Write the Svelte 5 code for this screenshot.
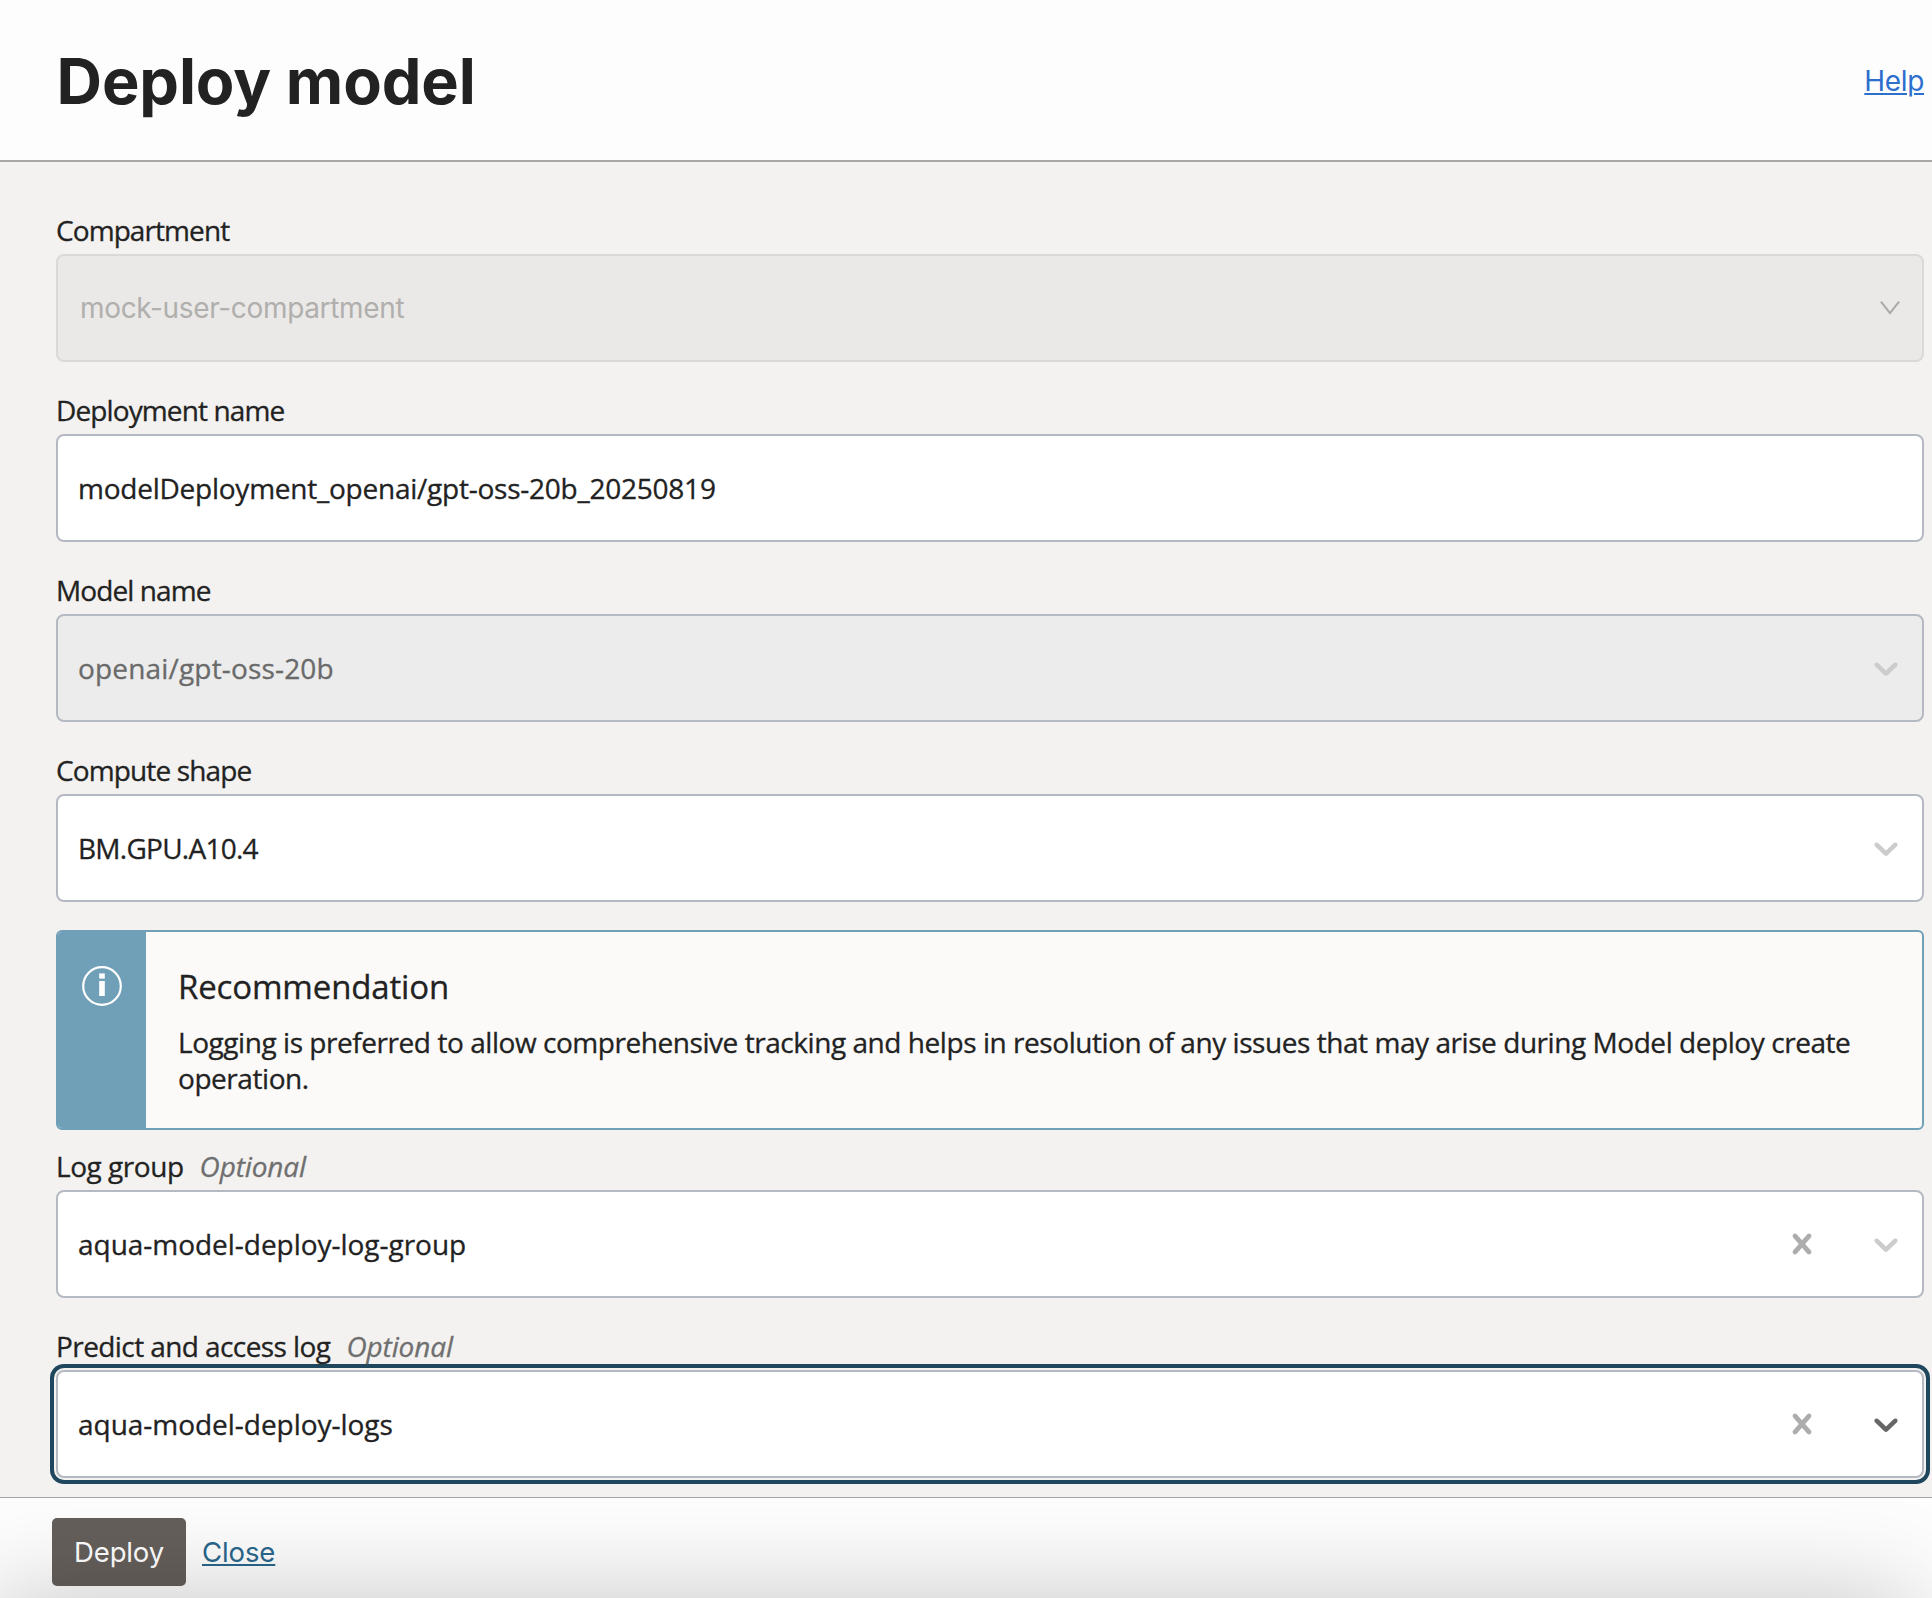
<script>
  const fields = [
    { id: 'compartment', label: 'Compartment', value: 'mock-user-compartment', kind: 'muted', thin: true },
    { id: 'deployment', label: 'Deployment name', value: 'modelDeployment_openai/gpt-oss-20b_20250819', kind: 'input' },
    { id: 'model', label: 'Model name', value: 'openai/gpt-oss-20b', kind: 'disabled', chevron: true },
    { id: 'shape', label: 'Compute shape', value: 'BM.GPU.A10.4', kind: 'select', chevron: true }
  ];
  const logFields = [
    { id: 'loggroup', label: 'Log group', optional: true, value: 'aqua-model-deploy-log-group', kind: 'select', clear: true, chevron: true },
    { id: 'predict', label: 'Predict and access log', optional: true, value: 'aqua-model-deploy-logs', kind: 'focused', clear: true, chevron: true }
  ];
</script>

{#snippet formField(f)}
  <div class="field {f.id}">
    <div class="label"><span class="name">{f.label}</span>{#if f.optional}<em>Optional</em>{/if}</div>
    <div class="control {f.kind}">
      <span class="value">{f.value}</span>
      {#if f.clear}
        <svg class="clear" viewBox="0 0 20 20"><path d="M14.348 14.849c-0.469 0.469-1.229 0.469-1.697 0l-2.651-3.030-2.651 3.029c-0.469 0.469-1.229 0.469-1.697 0-0.469-0.469-0.469-1.229 0-1.697l2.758-3.15-2.759-3.152c-0.469-0.469-0.469-1.228 0-1.697s1.228-0.469 1.697 0l2.652 3.031 2.651-3.031c0.469-0.469 1.228-0.469 1.697 0s0.469 1.229 0 1.697l-2.758 3.152 2.758 3.15c0.469 0.469 0.469 1.229 0 1.698z" /></svg>
      {/if}
      {#if f.chevron}
        <svg class="chevron" viewBox="0 0 20 20"><path d="M4.516 7.548c0.436-0.446 1.043-0.481 1.576 0l3.908 3.747 3.908-3.747c0.533-0.481 1.141-0.446 1.574 0 0.436 0.445 0.408 1.197 0 1.615-0.406 0.418-4.695 4.502-4.695 4.502-0.217 0.223-0.502 0.335-0.787 0.335s-0.57-0.112-0.789-0.335c0 0-4.287-4.084-4.695-4.502s-0.436-1.17 0-1.615z" /></svg>
      {/if}
      {#if f.thin}
        <svg class="thin" viewBox="0 0 20 14"><path d="M0.9 0.6 10 12.2 19.1 0.6" /></svg>
      {/if}
    </div>
  </div>
{/snippet}

<div class="page">
  <header>
    <h1>Deploy model</h1>
    <a class="help" href="#help">Help</a>
  </header>

  <main>
    {#each fields as f}{@render formField(f)}{/each}

    <section class="alert">
      <div class="strip">
        <svg viewBox="0 0 40 40">
          <circle cx="20" cy="20" r="18.8" />
          <rect x="17.2" y="7.4" width="5.6" height="5.2" />
          <rect x="17.2" y="15" width="5.6" height="15" />
        </svg>
      </div>
      <div class="message">
        <h2>Recommendation</h2>
        <p>Logging is preferred to allow comprehensive tracking and helps in resolution of any issues that may arise during Model deploy create operation.</p>
      </div>
    </section>

    {#each logFields as f}{@render formField(f)}{/each}
  </main>

  <footer>
    <button>Deploy</button>
    <a class="close" href="#close">Close</a>
  </footer>
</div>

<style>
  :global(body) { margin: 0; }
  .page {
    box-sizing: border-box;
    display: flex;
    flex-direction: column;
    height: 1598px;
    overflow: hidden;
    background: #f3f2f0;
    color: #222;
    font: 28px 'Open Sans', 'Noto Sans', sans-serif;
  }
  header {
    box-sizing: border-box;
    height: 162px;
    padding: 2px 8px 0 56.5px;
    display: flex;
    align-items: center;
    justify-content: space-between;
    background: #fdfdfd;
    border-bottom: 2px solid #a8a8a5;
    font-family: Inter, sans-serif;
  }
  h1 { margin: 0; font-size: 63px; font-weight: 700; line-height: 76px; letter-spacing: -0.12px; }
  a { text-decoration: underline; text-decoration-thickness: 2px; text-underline-offset: 2px; }
  .help { color: #2c6fcd; line-height: 34px; letter-spacing: -0.35px; }
  main { flex: 1; padding: 44px 8px 0 56px; -webkit-text-stroke-width: 0.3px; }
  .field + .field { margin-top: 24px; }
  .label { display: flex; gap: 16px; height: 48px; line-height: 48px; white-space: nowrap; }
  .label em { color: #6f6f6f; letter-spacing: -0.13px; }
  .control {
    box-sizing: border-box;
    height: 108px;
    padding: 0 16px 0 20px;
    display: flex;
    align-items: center;
    background: #fff;
    border: 2px solid #b5b9c1;
    border-radius: 8px;
  }
  .value { flex: 1; line-height: 104px; white-space: nowrap; }
  .control svg { flex: none; display: block; }
  .chevron, .clear { width: 40px; height: 40px; }
  .chevron { fill: #ccc; }
  .clear { fill: #adadad; margin-right: 44px; }
  .thin { width: 20px; height: 14px; margin-right: 6px; fill: none; stroke: #aaaaa8; stroke-width: 2; }
  .muted { padding-left: 22px; background: #eae9e7; border-color: #dad9d7; color: #b0afad; font-family: Inter, sans-serif; -webkit-text-stroke-width: 0; }
  .disabled { background: #ececec; color: #6a6a6a; }
  .focused { box-shadow: 0 0 0 2px #f3f2f1, 0 0 0 6px #1e475d; }
  .focused .chevron { fill: #666; }

  .compartment .name { letter-spacing: -0.92px; }
  .compartment .value { letter-spacing: -0.34px; }
  .deployment .name { letter-spacing: -0.88px; }
  .deployment .value { letter-spacing: -0.24px; }
  .model .name { letter-spacing: -0.9px; }
  .model .value { letter-spacing: 0.17px; }
  .shape .name { letter-spacing: -0.87px; }
  .shape .value { letter-spacing: -0.74px; }
  .loggroup .name { letter-spacing: -0.46px; }
  .loggroup .value { letter-spacing: -0.03px; }
  .predict .name { letter-spacing: -0.58px; }
  .predict .value { letter-spacing: -0.03px; }

  .alert {
    box-sizing: border-box;
    height: 200px;
    margin: 28px 0 12px;
    display: flex;
    overflow: hidden;
    background: #fbfaf8;
    border: 2px solid #70a0b8;
    border-radius: 6px;
  }
  .strip { flex: none; width: 88px; padding: 34px 0 0 24px; box-sizing: border-box; background: #70a0b8; }
  .strip svg { display: block; width: 40px; height: 40px; fill: #fff; }
  .strip circle { fill: none; stroke: #fff; stroke-width: 2.2; }
  .message { flex: 1; padding: 32px 20px 0 32px; }
  h2 { margin: 0 0 15px; font-size: 33px; font-weight: 400; line-height: 45px; letter-spacing: -0.15px; }
  p { margin: 0; line-height: 36px; letter-spacing: -0.445px; }

  footer {
    box-sizing: border-box;
    position: relative;
    flex: none;
    height: 101px;
    padding: 20px 0 0 52px;
    display: flex;
    align-items: flex-start;
    gap: 16px;
    background: #fdfdfd;
    border-top: 1px solid #a5a5a5;
    font: 27.5px Inter, sans-serif;
    overflow: hidden;
  }
  /* soft shadow rising from the lower edge of the drawer */
  footer::after {
    content: '';
    position: absolute;
    top: 100%;
    left: -10px;
    right: 16px;
    height: 300px;
    box-shadow: 0 0 96px rgba(0, 0, 0, 0.22);
    pointer-events: none;
  }
  button {
    width: 134px;
    height: 68px;
    padding: 0;
    border: 0;
    border-radius: 5px;
    background: #655f5b;
    color: #fff;
    font: inherit;
    letter-spacing: -0.15px;
  }
  .close { color: #2a678c; line-height: 68px; letter-spacing: -0.1px; }
</style>
